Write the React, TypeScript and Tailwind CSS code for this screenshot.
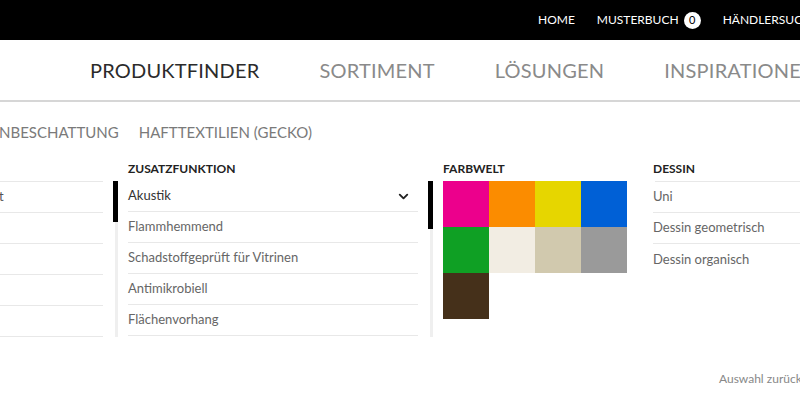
import { ChevronDown } from "lucide-react";

const topLinks = ["HOME", "MUSTERBUCH", "HÄNDLERSUCHE"];
const mainNav = ["PRODUKTFINDER", "SORTIMENT", "LÖSUNGEN", "INSPIRATIONEN"];
const extras = ["Akustik", "Flammhemmend", "Schadstoffgeprüft für Vitrinen", "Antimikrobiell", "Flächenvorhang"];
const swatches = ["#ec008c", "#fb8c00", "#e6d600", "#0060d6", "#0fa024", "#f2ede3", "#d1c9ae", "#9a9a9a", "#45301a"];
const dessins = ["Uni", "Dessin geometrisch", "Dessin organisch"];

function Scrollbar({ thumb }: { thumb: string }) {
    return (
        <div className="relative w-[5px] h-[156px]">
            <div className="absolute left-[2px] top-0 w-[3px] h-full bg-[#efefef]" />
            <div className={`absolute left-0 top-0 w-[5px] bg-black ${thumb}`} />
        </div>
    );
}

export default function App() {
    return (
        <div className="w-[800px] h-[402px] overflow-hidden bg-white font-['Lato',sans-serif]">
            {/* service bar */}
            <div className="h-[40px] bg-black flex items-center pl-[538px] gap-[22px] whitespace-nowrap text-white text-[12px]">
                {topLinks.map((l) => (
                    <div key={l} className="flex items-center gap-[5px]">
                        <span>{l}</span>
                        {l === "MUSTERBUCH" && (
                            <span className="w-[17px] h-[17px] rounded-full bg-white text-black text-[11px] flex items-center justify-center">0</span>
                        )}
                    </div>
                ))}
            </div>

            {/* main navigation */}
            <div className="h-[62px] border-b-2 border-[#d6d6d6] flex items-center pl-[90px] gap-[60px] whitespace-nowrap text-[20px] tracking-[0.2px]">
                {mainNav.map((n, i) => (
                    <span key={n} className={i === 0 ? "text-[#2b2b2b]" : "text-[#8a8a8a]"}>{n}</span>
                ))}
            </div>

            {/* category tabs */}
            <div className="h-[60px] flex items-center gap-[20px] whitespace-nowrap text-[15px] text-[#7a7a7a] pt-[1px]">
                <span className="-ml-[1px]">NBESCHATTUNG</span>
                <span>HAFTTEXTILIEN (GECKO)</span>
            </div>

            {/* filters */}
            <div className="flex whitespace-nowrap">
                <div className="w-[103px] pt-[19px]">
                    <div className="border-t border-[#e8e8e8]">
                        {["t", "", "", "", ""].map((t, i) => (
                            <div key={i} className="h-[31px] border-b border-[#e8e8e8] flex items-center text-[13px] text-[#555] -ml-[1px]">{t}</div>
                        ))}
                    </div>
                </div>

                <div className="ml-[10px] pt-[19px]">
                    <Scrollbar thumb="h-[41px]" />
                </div>

                <div className="ml-[10px] w-[290px]">
                    <div className="h-[19px] text-[12px] font-bold text-[#222] leading-[14px]">ZUSATZFUNKTION</div>
                    {extras.map((e, i) => (
                        <div key={e} className="h-[31px] border-b border-[#e8e8e8] flex items-center justify-between text-[13px]">
                            <span className={i === 0 ? "text-[#333]" : "text-[#666]"}>{e}</span>
                            {i === 0 && <ChevronDown size={15} strokeWidth={3} className="mr-[7px] text-[#222]" />}
                        </div>
                    ))}
                </div>

                <div className="ml-[10px] pt-[19px]">
                    <Scrollbar thumb="h-[48px]" />
                </div>

                <div className="ml-[10px] w-[184px]">
                    <div className="h-[19px] text-[12px] font-bold text-[#222] leading-[14px]">FARBWELT</div>
                    <div className="grid grid-cols-4">
                        {swatches.map((c) => (
                            <div key={c} className="h-[46px]" style={{ backgroundColor: c }} />
                        ))}
                    </div>
                </div>

                <div className="ml-[26px] flex-1">
                    <div className="h-[19px] text-[12px] font-bold text-[#222] leading-[14px]">DESSIN</div>
                    <div className="border-t border-[#e8e8e8] ml-[2px]">
                        {dessins.map((d, i) => (
                            <div key={d} className={`h-[31px] flex items-center text-[13px] text-[#666] -ml-[2px] ${i < 2 ? "border-b border-[#e8e8e8]" : ""}`}>{d}</div>
                        ))}
                    </div>
                </div>
            </div>

            <div className="mt-[33px] pl-[719px] whitespace-nowrap text-[12px] text-[#888]">Auswahl zurücksetzen</div>
        </div>
    );
}
